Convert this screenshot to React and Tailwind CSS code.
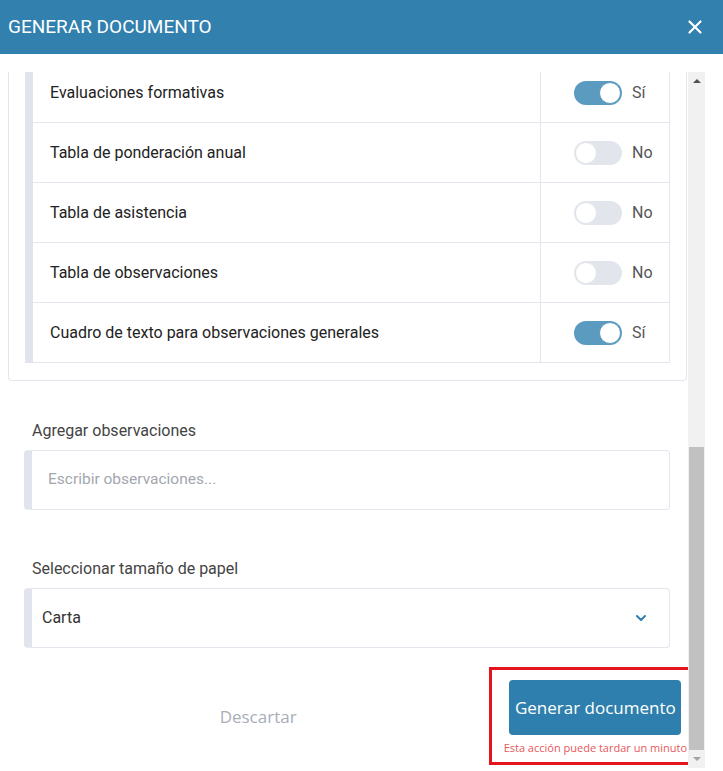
import { X, ChevronDown } from 'lucide-react';

const rows = [
  { label: 'Evaluaciones formativas', on: true },
  { label: 'Tabla de ponderación anual', on: false },
  { label: 'Tabla de asistencia', on: false },
  { label: 'Tabla de observaciones', on: false },
  { label: 'Cuadro de texto para observaciones generales', on: true },
];

function Toggle({ on }) {
  return (
    <div className="flex items-center gap-[10px]">
      <div
        className={`flex h-[24px] w-[48px] items-center rounded-full px-[1px] ${
          on ? 'justify-end bg-[#5b9bbf]' : 'justify-start bg-[#e2e5ec]'
        }`}
      >
        <div className={`h-[22px] w-[22px] rounded-full bg-white ${on ? 'border border-[#5b9bbf]' : 'border border-[#e2e5ec]'}`} />
      </div>
      <span className="text-[16px] text-[#555]">{on ? 'Sí' : 'No'}</span>
    </div>
  );
}

export default function App() {
  return (
    <div className="h-[771px] w-[723px] overflow-hidden bg-white font-['Roboto',sans-serif]">
      {/* header */}
      <div className="flex h-[54px] items-center justify-between bg-[#3180ae] pl-[8px] pr-[17px] text-white">
        <h1 className="text-[19px]">GENERAR DOCUMENTO</h1>
        <X className="h-[22px] w-[22px]" strokeWidth={2.4} />
      </div>

      <div className="flex pt-[18px]">
        {/* scroll content */}
        <div className="h-[696px] w-[688px] overflow-hidden">
          <div className="-mt-[9px]">
            <div className="ml-[8px] w-[679px] rounded-b border-x border-b border-[#e3e6ec] px-[16px] pb-[17px]">
              <div className="border-l-[8px] border-[#e1e4ec]">
                {rows.map((r) => (
                  <div key={r.label} className="flex h-[60px] border-b border-r border-[#e3e6ec]">
                    <div className="flex flex-1 items-center pl-[17px] pt-[1px] text-[16px] text-[#222]">{r.label}</div>
                    <div className="flex w-[129px] items-center border-l border-[#e3e6ec] pl-[33px]">
                      <Toggle on={r.on} />
                    </div>
                  </div>
                ))}
              </div>
            </div>

            <div className="px-[24px] pr-[18px]">
              <label className="mt-[40px] block pl-[8px] text-[16px] leading-[20px] text-[#444]">Agregar observaciones</label>
              <div className="mt-[9px] flex h-[60px] items-center rounded border border-l-[8px] border-[#e3e6ec] border-l-[#e1e4ec] pl-[16px] text-[15.5px] text-[#a3a7ae]">
                Escribir observaciones...
              </div>

              <label className="mt-[49px] block pl-[8px] text-[16px] leading-[20px] text-[#444]">Seleccionar tamaño de papel</label>
              <div className="mt-[9px] flex h-[60px] items-center justify-between rounded border border-l-[8px] border-[#e3e6ec] border-l-[#e1e4ec] pl-[10px] pr-[20px] text-[16px] text-[#333]">
                <span>Carta</span>
                <ChevronDown className="h-[16px] w-[16px] text-[#2e7fad]" strokeWidth={3} />
              </div>
            </div>

            {/* footer */}
            <div className="relative mt-[32px] flex items-start justify-end gap-[207px] pr-[1px] font-['Open_Sans',sans-serif]">
              <div className="mt-[25px] text-[17px] leading-[24px] text-[#a9aeb8]">Descartar</div>
              <div className="flex flex-col items-center">
                <button className="h-[55px] w-[172px] rounded-[4px] bg-[#2e7fad] text-[17px] text-white">Generar documento</button>
                <div className="mt-[6px] text-[11px] leading-[14px] text-[#e8585a]">Esta acción puede tardar un minuto</div>
              </div>
              <div className="pointer-events-none absolute left-[489px] top-[-13px] h-[98px] w-[204px] border-[3px] border-[#e3141f]" />
            </div>
          </div>
        </div>

        {/* scrollbar */}
        <div className="flex h-[696px] w-[17px] flex-col items-center bg-[#f1f1f1]">
          <div className="flex h-[17px] items-center justify-center">
            <div className="h-0 w-0 border-x-[4px] border-b-[4px] border-x-transparent border-b-[#505050]" />
          </div>
          <div className="mt-[358px] h-[303px] w-[15px] bg-[#c1c1c1]" />
          <div className="flex h-[17px] items-center justify-center">
            <div className="h-0 w-0 border-x-[4px] border-t-[4px] border-x-transparent border-t-[#a3a3a3]" />
          </div>
        </div>
      </div>
    </div>
  );
}
